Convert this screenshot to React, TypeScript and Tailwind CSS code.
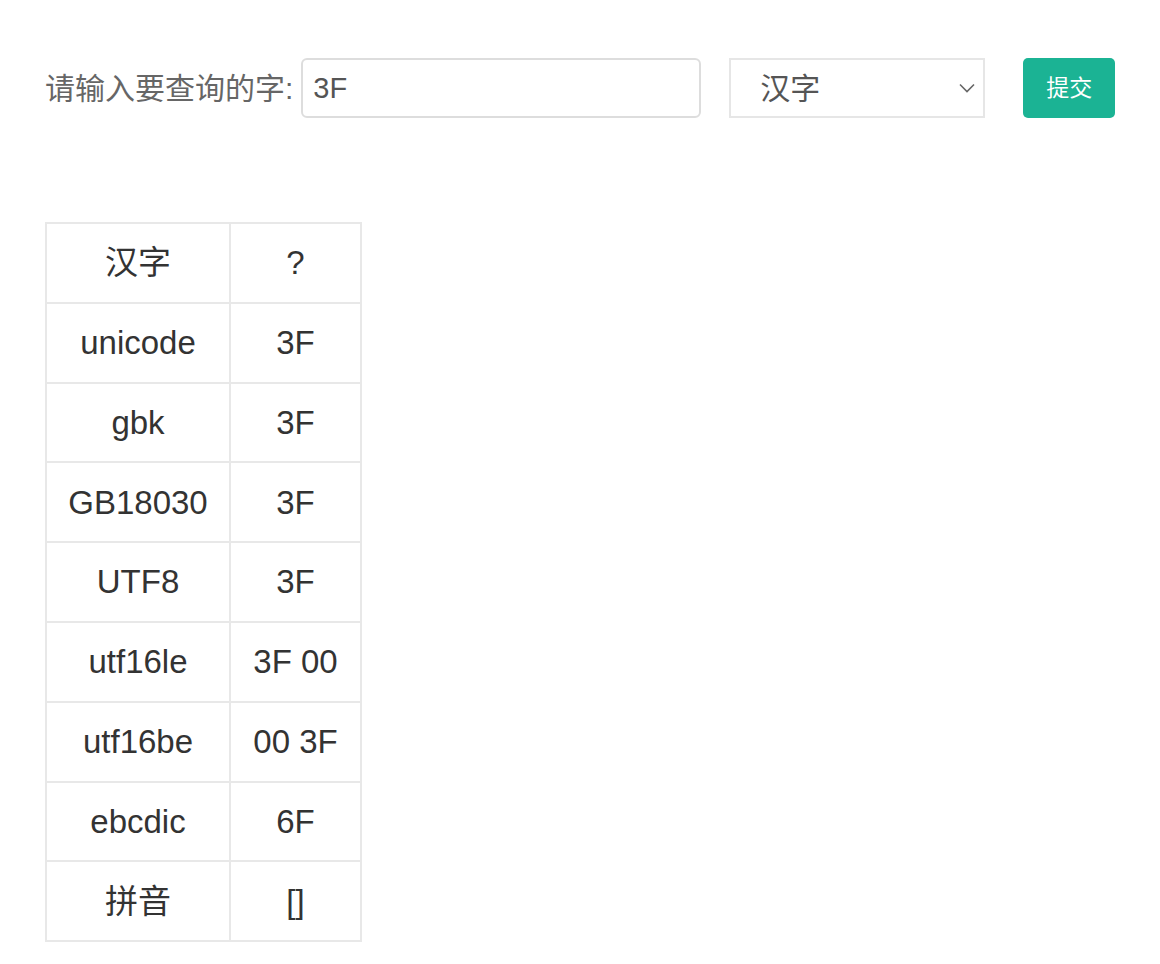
import React, { useState } from 'react';

const rows: Array<[string, string]> = [
  ['汉字', '?'],
  ['unicode', '3F'],
  ['gbk', '3F'],
  ['GB18030', '3F'],
  ['UTF8', '3F'],
  ['utf16le', '3F 00'],
  ['utf16be', '00 3F'],
  ['ebcdic', '6F'],
  ['拼音', '[]'],
];

export default function App() {
  const [word, setWord] = useState('3F');
  const [kind, setKind] = useState('汉字');

  return (
    <div
      className="min-h-screen bg-white pl-[45px] pt-[58px]"
      style={{ fontFamily: '"Liberation Sans", "Noto Sans CJK SC", sans-serif' }}
    >
      {/* 查询表单 */}
      <div className="flex items-center">
        <label className="text-[30px] text-[#666]">请输入要查询的字:</label>
        <input
          value={word}
          onChange={(e) => setWord(e.target.value)}
          className="ml-[8px] h-[60px] w-[400px] rounded-[6px] border-2 border-[#dddddd] px-[10px] text-[29px] text-[#555] outline-none"
        />
        <div className="relative ml-[28px] h-[60px] w-[256px]">
          <select
            value={kind}
            onChange={(e) => setKind(e.target.value)}
            className="h-full w-full appearance-none border-2 border-[#e6e6e6] bg-white pl-[29px] text-[30px] text-[#555] outline-none"
          >
            <option>汉字</option>
            <option>unicode</option>
          </select>
          <svg
            className="pointer-events-none absolute right-[10px] top-[25px]"
            width="16"
            height="10"
            viewBox="0 0 16 10"
            fill="none"
            stroke="#666"
            strokeWidth="1.6"
          >
            <path d="M1 1.5 L8 8.5 L15 1.5" />
          </svg>
        </div>
        <button className="ml-[38px] h-[60px] w-[92px] rounded-[5px] bg-[#1bb394] text-[23px] text-white">
          提交
        </button>
      </div>

      {/* 结果表格 */}
      <table className="mt-[104px] border-collapse text-[33px] text-[#333]">
        <tbody>
          {rows.map(([name, value], index) => (
            <tr key={index} className="h-[79.8px]">
              <td className="w-[184px] border-2 border-[#e8e8e8] text-center">{name}</td>
              <td className="w-[131px] border-2 border-[#e8e8e8] text-center">{value}</td>
            </tr>
          ))}
        </tbody>
      </table>
    </div>
  );
}
